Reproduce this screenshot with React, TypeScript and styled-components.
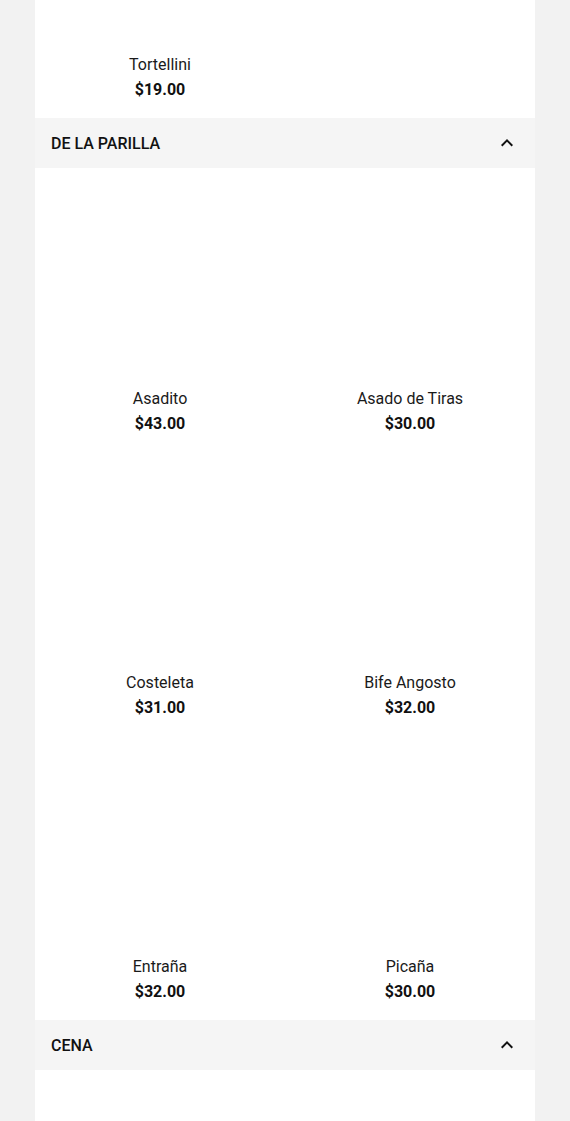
import styled, { createGlobalStyle } from "styled-components"

const GlobalStyle = createGlobalStyle`
  body {
    margin: 0;
    background: #f2f2f2;
    font-family: Roboto, "Noto Sans", "Liberation Sans", sans-serif;
    color: #1a1a1a;
    overflow: hidden;
  }
`

interface Item {
  name: string
  price: number
}

interface Section {
  title?: string
  items: Item[]
}

const sections: Section[] = [
  { items: [{ name: "Tortellini", price: 19 }] },
  {
    title: "De la parilla",
    items: [
      { name: "Asadito", price: 43 },
      { name: "Asado de Tiras", price: 30 },
      { name: "Costeleta", price: 31 },
      { name: "Bife Angosto", price: 32 },
      { name: "Entraña", price: 32 },
      { name: "Picaña", price: 30 }
    ]
  },
  { title: "Cena", items: [] }
]

const Page = styled.div`
  width: 500px;
  margin: -166px auto 0;
  background: #fff;
  height: 1287px;
`

const Header = styled.div`
  height: 50px;
  display: flex;
  align-items: center;
  justify-content: space-between;
  padding: 0 16px;
  background: #f5f5f5;
  font-size: 16px;
  font-weight: 500;
  text-transform: uppercase;
  color: #111;

  svg {
    width: 24px;
    height: 24px;
    fill: #111;
  }
`

const Grid = styled.div`
  display: grid;
  grid-template-columns: 1fr 1fr;
`

const Card = styled.div`
  height: 284px;
  box-sizing: border-box;
  padding: 10px 10px 0;
  display: flex;
  flex-direction: column;
  align-items: center;
`

const Photo = styled.div`
  width: 100%;
  height: 200px;
  margin-bottom: 11px;
  background: #fff;
`

const Name = styled.div`
  font-size: 16px;
  line-height: 20px;
  color: #1a1a1a;
`

const Price = styled.div`
  margin-top: 5px;
  font-size: 16px;
  line-height: 20px;
  font-weight: 700;
  color: #111;
`

const ChevronUp = () => (
  <svg viewBox="0 0 24 24">
    <path d="M12 8l-6 6 1.41 1.41L12 10.83l4.59 4.58L18 14z" />
  </svg>
)

const App = () => (
  <>
    <GlobalStyle />
    <Page>
      {sections.map((section, i) => (
        <div key={i}>
          {section.title && (
            <Header>
              <span>{section.title}</span>
              <ChevronUp />
            </Header>
          )}
          <Grid>
            {section.items.map((item) => (
              <Card key={item.name}>
                <Photo />
                <Name>{item.name}</Name>
                <Price>${item.price.toFixed(2)}</Price>
              </Card>
            ))}
          </Grid>
        </div>
      ))}
    </Page>
  </>
)

export default App
